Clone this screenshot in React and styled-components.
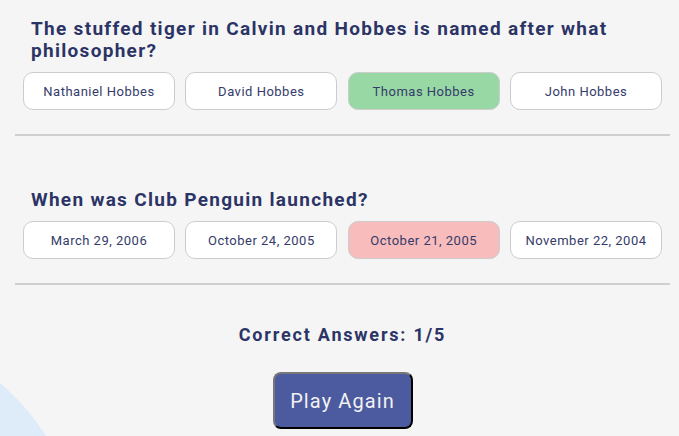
import React from 'react';
import styled, { createGlobalStyle } from 'styled-components';

const GlobalStyle = createGlobalStyle`
  html, body {
    margin: 0;
    padding: 0;
    background: #f5f5f5;
    font-family: Roboto, "Liberation Sans", sans-serif;
    overflow: hidden;
  }
`;

const Page = styled.div`
  position: relative;
  width: 679px;
  height: 436px;
  overflow: hidden;
  background: #f5f5f5;
`;

// decorative circle peeking in at the bottom-left corner
const Blob = styled.div`
  position: absolute;
  left: -382px;
  top: 328px;
  width: 464px;
  height: 464px;
  border-radius: 50%;
  background: #deebf8;
`;

const Quiz = styled.div`
  position: relative;
  margin-left: 15px;
  width: 655px;
  display: flex;
  flex-direction: column;
`;

const QuestionBlock = styled.section`
  padding: ${props => (props.first ? '18px' : '53px')} 8px 24px;
  border-bottom: 2px solid #cfcfcf;
`;

const QuestionText = styled.h2`
  margin: 0 0 10px;
  padding-left: 8px;
  font-size: 19px;
  line-height: 22px;
  font-weight: 700;
  letter-spacing: 1.3px;
  color: #2b3465;
`;

const Options = styled.div`
  display: grid;
  grid-template-columns: repeat(4, 1fr);
  gap: 10.4px;
`;

const bgFor = state =>
  state === 'correct' ? '#98d8a4' : state === 'wrong' ? '#f8bcbc' : '#ffffff';

const Option = styled.button`
  height: 38px;
  border: 1px solid #cccccc;
  border-radius: 10px;
  background: ${props => bgFor(props.state)};
  color: #343b6a;
  font-family: Roboto, "Liberation Sans", sans-serif;
  font-size: 13px;
  letter-spacing: 0.5px;
  padding: 0;
  cursor: pointer;
`;

const Result = styled.div`
  display: flex;
  flex-direction: column;
  align-items: center;
  padding-top: 39px;
`;

const Score = styled.p`
  margin: 0 0 26px;
  font-size: 18px;
  line-height: 22px;
  font-weight: 700;
  letter-spacing: 1.8px;
  color: #2b3465;
`;

const PlayButton = styled.button`
  width: 140px;
  height: 57px;
  background: #4c5a9f;
  color: #f2f2f2;
  border: 2px outset #555;
  border-color: #777 #222 #222 #777;
  border-radius: 8px;
  font-family: Roboto, "Liberation Sans", sans-serif;
  font-size: 20px;
  letter-spacing: 1.1px;
  padding: 0;
  cursor: pointer;
`;

const questions = [
  {
    text: 'The stuffed tiger in Calvin and Hobbes is named after what philosopher?',
    options: ['Nathaniel Hobbes', 'David Hobbes', 'Thomas Hobbes', 'John Hobbes'],
    states: [null, null, 'correct', null],
  },
  {
    text: 'When was Club Penguin launched?',
    options: ['March 29, 2006', 'October 24, 2005', 'October 21, 2005', 'November 22, 2004'],
    states: [null, null, 'wrong', null],
  },
];

export default function App() {
  return (
    <Page>
      <GlobalStyle />
      <Blob />
      <Quiz>
        {questions.map((q, i) => (
          <QuestionBlock key={i} first={i === 0}>
            <QuestionText>{q.text}</QuestionText>
            <Options>
              {q.options.map((opt, j) => (
                <Option key={j} state={q.states[j]}>{opt}</Option>
              ))}
            </Options>
          </QuestionBlock>
        ))}
        <Result>
          <Score>Correct Answers: 1/5</Score>
          <PlayButton>Play Again</PlayButton>
        </Result>
      </Quiz>
    </Page>
  );
}
